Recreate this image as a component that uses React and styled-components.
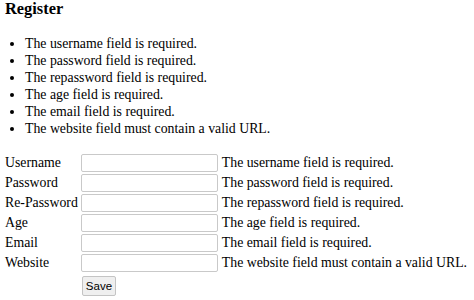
import React from 'react';
import styled, { createGlobalStyle } from 'styled-components';

const GlobalStyle = createGlobalStyle`
  body {
    margin: 0;
    background: #fff;
    color: #000;
    font-family: "Liberation Serif", "Times New Roman", serif;
    font-size: 13.8px;
  }
`;

const Page = styled.div`
  padding: 0 5px;
`;

const Title = styled.h3`
  margin: 0;
  padding-top: 1px;
  font-size: 16.4px;
  font-weight: bold;
  line-height: 16px;
`;

const ErrorList = styled.ul`
  margin: 18px 0 15px;
  padding-left: 20px;
  line-height: 17px;
`;

const Form = styled.table`
  border-collapse: separate;
  border-spacing: 0 2px;
  margin-left: -1px;
`;

const Label = styled.td`
  padding: 0 3px 0 1px;
  line-height: 16px;
  white-space: nowrap;
`;

const Field = styled.td`
  padding: 0;
`;

const Message = styled.td`
  padding: 0 0 0 4px;
  white-space: nowrap;
`;

const Input = styled.input`
  display: block;
  box-sizing: border-box;
  width: 137px;
  height: 18px;
  margin: 0;
  padding: 1px 2px;
  border: 1px solid #c9c9c9;
  border-radius: 2px;
  background: #fff;
  font-size: 12px;
`;

const SaveButton = styled.button`
  display: block;
  box-sizing: border-box;
  height: 20px;
  margin-top: 2px;
  margin-left: 1px;
  padding: 0 3px;
  border: 1px solid #c4c4c4;
  border-radius: 2px;
  background: #efefef;
  color: #000;
  font-family: "Liberation Sans", Arial, sans-serif;
  font-size: 11.5px;
  line-height: 16px;
`;

const errors = [
  'The username field is required.',
  'The password field is required.',
  'The repassword field is required.',
  'The age field is required.',
  'The email field is required.',
  'The website field must contain a valid URL.',
];

const fields = [
  { label: 'Username', type: 'text', error: errors[0] },
  { label: 'Password', type: 'password', error: errors[1] },
  { label: 'Re-Password', type: 'password', error: errors[2] },
  { label: 'Age', type: 'text', error: errors[3] },
  { label: 'Email', type: 'text', error: errors[4] },
  { label: 'Website', type: 'text', error: errors[5] },
];

export default function App() {
  return (
    <Page>
      <GlobalStyle />
      <Title>Register</Title>
      <ErrorList>
        {errors.map((e) => (
          <li key={e}>{e}</li>
        ))}
      </ErrorList>
      <Form>
        <tbody>
          {fields.map((f) => (
            <tr key={f.label}>
              <Label>{f.label}</Label>
              <Field>
                <Input type={f.type} />
              </Field>
              <Message>{f.error}</Message>
            </tr>
          ))}
          <tr>
            <td />
            <Field>
              <SaveButton type="submit">Save</SaveButton>
            </Field>
            <td />
          </tr>
        </tbody>
      </Form>
    </Page>
  );
}
